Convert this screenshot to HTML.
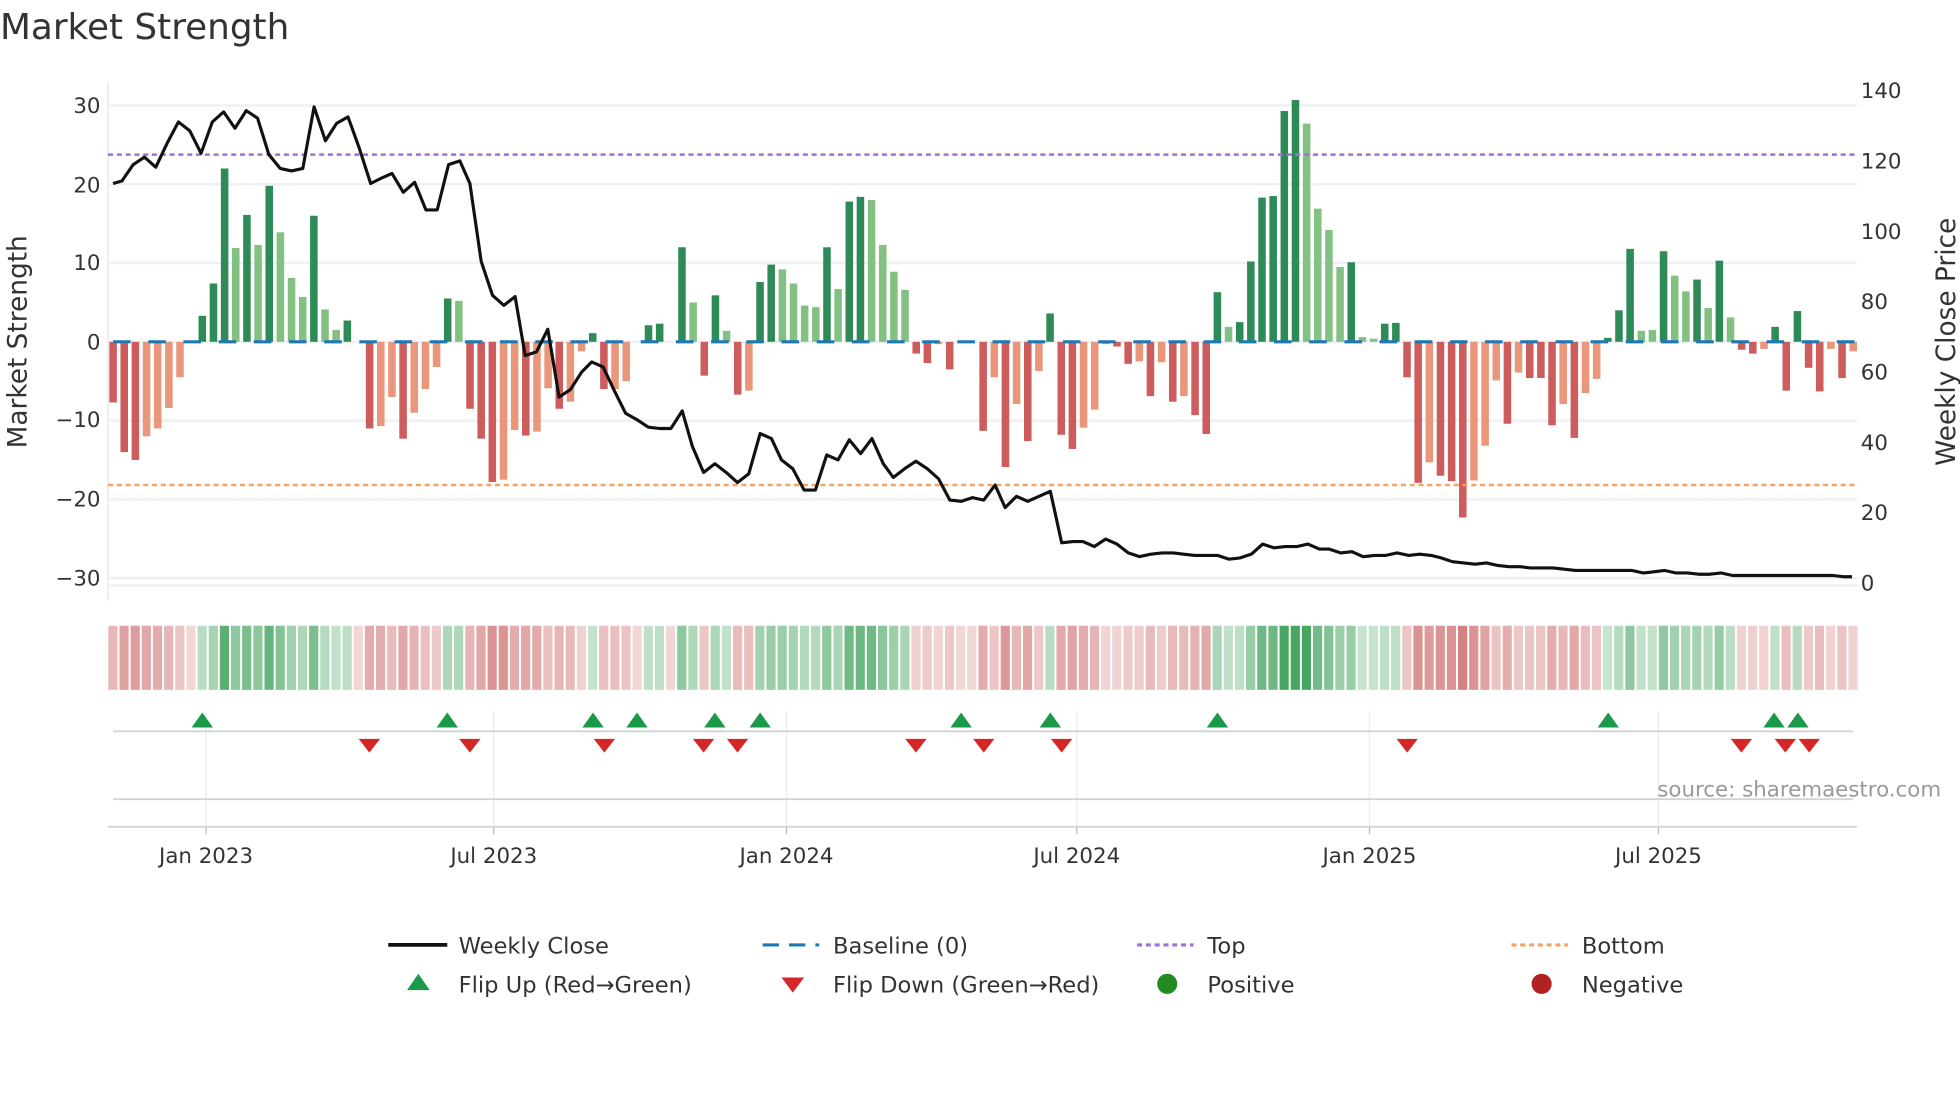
<!DOCTYPE html>
<html><head><meta charset="utf-8">
<style>
html,body{margin:0;padding:0;background:#fff;}
svg{display:block;font-family:"DejaVu Sans","Liberation Sans",sans-serif;}
</style></head>
<body>
<svg id="s" width="1960" height="1102" viewBox="0 0 1560 877" xmlns="http://www.w3.org/2000/svg">
<rect width="1560" height="877" fill="#fff"/>
<text x="0" y="31" font-size="28.5" fill="#333">Market Strength</text>
<g id="grid"></g>
<g id="bars"></g>
<g id="strip"></g>
<g id="marks"></g>
<g font-size="17" fill="#333">
<text x="80" y="90" text-anchor="end">30</text>
<text x="80" y="153" text-anchor="end">20</text>
<text x="80" y="215" text-anchor="end">10</text>
<text x="80" y="278" text-anchor="end">0</text>
<text x="80" y="340" text-anchor="end">−10</text>
<text x="80" y="403" text-anchor="end">−20</text>
<text x="80" y="466" text-anchor="end">−30</text>
<text x="1481" y="78">140</text>
<text x="1481" y="134">120</text>
<text x="1481" y="190">100</text>
<text x="1481" y="246">80</text>
<text x="1481" y="302">60</text>
<text x="1481" y="358">40</text>
<text x="1481" y="414">20</text>
<text x="1481" y="470">0</text>
<text x="164" y="687" text-anchor="middle">Jan 2023</text>
<text x="393" y="687" text-anchor="middle">Jul 2023</text>
<text x="626" y="687" text-anchor="middle">Jan 2024</text>
<text x="857" y="687" text-anchor="middle">Jul 2024</text>
<text x="1090" y="687" text-anchor="middle">Jan 2025</text>
<text x="1320" y="687" text-anchor="middle">Jul 2025</text>
</g>
<text transform="translate(21,272) rotate(-90)" font-size="21" fill="#333" text-anchor="middle">Market Strength</text>
<text transform="translate(1556,272) rotate(-90)" font-size="21" fill="#333" text-anchor="middle">Weekly Close Price</text>
<text x="1545" y="634" font-size="17" fill="#999" text-anchor="end">source: sharemaestro.com</text>
<g font-size="18" fill="#333">
<line x1="309" y1="752" x2="356" y2="752" stroke="#111" stroke-width="3"/>
<text x="365" y="759">Weekly Close</text>
<line x1="607" y1="752" x2="652" y2="752" stroke="#1f77b4" stroke-width="2.5" stroke-dasharray="13,8"/>
<text x="663" y="759">Baseline (0)</text>
<line x1="905" y1="752" x2="950" y2="752" stroke="#a070d8" stroke-width="2.5" stroke-dasharray="4,3"/>
<text x="961" y="759">Top</text>
<line x1="1203" y1="752" x2="1248" y2="752" stroke="#f4a460" stroke-width="2.5" stroke-dasharray="4,3"/>
<text x="1259" y="759">Bottom</text>
<polygon points="324,788 342,788 333,775" fill="#1a9a48"/>
<text x="365" y="790">Flip Up (Red→Green)</text>
<polygon points="622,778 640,778 631,790" fill="#d62728"/>
<text x="663" y="790">Flip Down (Green→Red)</text>
<circle cx="929" cy="783" r="8" fill="#228b22"/>
<text x="961" y="790">Positive</text>
<circle cx="1227" cy="783" r="8" fill="#b22222"/>
<text x="1259" y="790">Negative</text>
</g>
</svg>
<script>
var NS="http://www.w3.org/2000/svg";
function el(p,t,a){var e=document.createElementNS(NS,t);for(var k in a)e.setAttribute(k,a[k]);document.getElementById(p).appendChild(e);return e;}
var V=[[-7.7,'D'],[-14,'D'],[-15,'D'],[-12,'L'],[-11,'L'],[-8.4,'L'],[-4.5,'L'],[0,'Z'],[3.3,'G'],[7.4,'G'],[22,'G'],[11.9,'g'],[16.1,'G'],[12.3,'g'],[19.8,'G'],[13.9,'g'],[8.1,'g'],[5.7,'g'],[16,'G'],[4.1,'g'],[1.5,'g'],[2.7,'G'],[0,'Z'],[-11,'D'],[-10.7,'L'],[-7,'L'],[-12.3,'D'],[-9,'L'],[-6,'L'],[-3.2,'L'],[5.5,'G'],[5.2,'g'],[-8.5,'D'],[-12.3,'D'],[-17.8,'D'],[-17.5,'L'],[-11.2,'L'],[-11.9,'D'],[-11.4,'L'],[-5.9,'L'],[-8.5,'D'],[-7.6,'L'],[-1.2,'L'],[1.1,'G'],[-6,'D'],[-6,'L'],[-5,'L'],[0,'Z'],[2.1,'G'],[2.3,'G'],[0,'Z'],[12,'G'],[5,'g'],[-4.3,'D'],[5.9,'G'],[1.4,'g'],[-6.7,'D'],[-6.2,'L'],[7.6,'G'],[9.8,'G'],[9.2,'g'],[7.4,'g'],[4.6,'g'],[4.4,'g'],[12,'G'],[6.7,'g'],[17.8,'G'],[18.4,'G'],[18,'g'],[12.3,'g'],[8.9,'g'],[6.6,'g'],[-1.5,'D'],[-2.7,'D'],[-0.3,'L'],[-3.5,'D'],[0,'Z'],[0,'Z'],[-11.3,'D'],
[-4.5,'L'],[-15.9,'D'],[-7.9,'L'],[-12.6,'D'],[-3.7,'L'],[3.6,'G'],[-11.8,'D'],[-13.6,'D'],[-10.9,'L'],[-8.6,'L'],[-0.3,'L'],[-0.6,'D'],[-2.8,'D'],[-2.5,'L'],[-6.9,'D'],[-2.6,'L'],[-7.6,'D'],[-6.9,'L'],[-9.3,'D'],[-11.7,'D'],[6.3,'G'],[1.9,'g'],[2.5,'G'],[10.2,'G'],[18.3,'G'],[18.5,'G'],[29.3,'G'],[30.7,'G'],[27.7,'g'],[16.9,'g'],[14.2,'g'],[9.5,'g'],[10.1,'G'],[0.6,'g'],[0.4,'g'],[2.3,'G'],[2.4,'G'],[-4.5,'D'],[-17.9,'D'],[-15.3,'L'],[-17,'D'],[-17.7,'D'],[-22.3,'D'],[-17.6,'L'],[-13.2,'L'],[-4.9,'L'],[-10.4,'D'],[-3.9,'L'],[-4.6,'D'],[-4.6,'D'],[-10.6,'D'],[-7.9,'L'],[-12.2,'D'],[-6.5,'L'],[-4.7,'L'],[0.5,'G'],[4,'G'],[11.8,'G'],[1.4,'g'],[1.5,'g'],[11.5,'G'],[8.4,'g'],[6.4,'g'],[7.9,'G'],[4.3,'g'],[10.3,'G'],[3.1,'g'],[-1,'D'],[-1.5,'D'],[-0.9,'L'],[1.9,'G'],[-6.2,'D'],[3.9,'G'],[-3.3,'D'],[-6.3,'D'],[-0.9,'L'],[-4.6,'D'],[-1.2,'L']];
var C={D:'#cd5c5c',L:'#e9967a',G:'#2e8b57',g:'#82c182',Z:'#fff'};
var X0=90,ST=(1475-90)/(V.length-1);
function yv(v){return 272-v*6.27;}
[30,20,10,0,-10,-20,-30].forEach(function(v){el('grid','line',{x1:86,x2:1478,y1:yv(v),y2:yv(v),stroke:'#eef0f3','stroke-width':2});});
el('grid','line',{x1:86,x2:86,y1:65,y2:478,stroke:'#eef0f3','stroke-width':2});
el('grid','line',{x1:86,x2:1478,y1:466,y2:466,stroke:'#eef0f3','stroke-width':2});
[164,393,626,857,1090,1320].forEach(function(x){el('grid','line',{x1:x,x2:x,y1:566,y2:658,stroke:'#e8ecf0','stroke-width':1});el('grid','line',{x1:x,x2:x,y1:658,y2:664,stroke:'#bbb','stroke-width':1});});
el('grid','line',{x1:90,x2:1475,y1:582,y2:582,stroke:'#d0d3d8','stroke-width':1.5});
el('grid','line',{x1:90,x2:1475,y1:636,y2:636,stroke:'#d0d3d8','stroke-width':1.5});
el('grid','line',{x1:86,x2:1478,y1:658,y2:658,stroke:'#d0d3d8','stroke-width':1.5});
V.forEach(function(b,i){var x=X0+i*ST,v=b[0];if(b[1]=='Z')return;var y0=yv(0),y1=yv(v);el('bars','rect',{x:x-3,y:Math.min(y0,y1),width:6,height:Math.max(1,Math.abs(y1-y0)),fill:C[b[1]]});});
el('bars','line',{x1:90,x2:1478,y1:272,y2:272,stroke:'#1f77b4','stroke-width':2.5,'stroke-dasharray':'14,14'});
el('bars','line',{x1:86,x2:1478,y1:123,y2:123,stroke:'#a070d8','stroke-width':2,'stroke-dasharray':'4,3'});
el('bars','line',{x1:86,x2:1478,y1:386,y2:386,stroke:'#f4a460','stroke-width':2,'stroke-dasharray':'4,3'});
var P="90,146 97,144 106,131 115,125 124,133 133,114 142,97 151,104 160,122 169,97 178,89 187,102 196,88 205,94 214,123 223,134 232,136 241,134 250,85 259,112 268,98 277,93 286,118 295,146 303,142 312,138 321,153 330,145 339,167 348,167 357,131 366,128 374,146 383,208 392,235 401,243 410,236 418,283 427,280 436,262 445,316 454,310 463,296 471,288 480,292 489,311 498,329 507,334 516,340 525,341 534,341 543,327 551,355 560,376 569,369 578,376 587,384 596,377 605,345 614,349 622,366 631,373 640,390 649,390 658,362 667,366 676,350 685,361 694,349 703,369 711,380 720,373 729,367 738,373 747,381 756,398 765,399 774,396 783,398 792,386 800,404 809,395 818,399 827,395 836,391 845,432 854,431 862,431 871,435 880,429 889,433 898,440 907,443 916,441 925,440 934,440 942,441 951,442 960,442 969,442 978,445 987,444 996,441 1005,433 1014,436 1023,435 1032,435 1041,433 1050,437 1058,437 1067,440 1076,439 1085,443 1094,442 1103,442 1112,440 1121,442 1130,441 1139,442 1147,444 1156,447 1165,448 1174,449 1183,448 1192,450 1201,451 1210,451 1218,452 1227,452 1236,452 1245,453 1254,454 1263,454 1272,454 1281,454 1290,454 1299,454 1308,456 1317,455 1325,454 1334,456 1343,456 1352,457 1361,457 1370,456 1379,458 1388,458 1396,458 1405,458 1414,458 1423,458 1432,458 1441,458 1450,458 1459,458 1468,459 1474,459";
el('bars','polyline',{points:P,fill:'none',stroke:'#111','stroke-width':2.5,'stroke-linejoin':'round'});
function mix(a,b,t){return 'rgb('+[0,1,2].map(function(k){return Math.round(a[k]+(b[k]-a[k])*t);}).join(',')+')';}
V.forEach(function(b,i){var x=X0+i*ST,v=b[0];var t=0.25+0.6*Math.min(1,Math.abs(v)/26);var c;
 if(v>0)c=mix([255,255,255],[40,150,70],t);else c=mix([255,255,255],[200,90,90],v==0?0.25:t);
 el('strip','rect',{x:x-3.8,y:498,width:7.3,height:51,fill:c});});
[161,356,472,507,569,605,765,836,969,1280,1412,1431].forEach(function(x){el('marks','polygon',{points:(x-8.5)+',579 '+(x+8.5)+',579 '+x+',567',fill:'#1a9a48'});});
[294,374,481,560,587,729,783,845,1120,1386,1421,1440].forEach(function(x){el('marks','polygon',{points:(x-8.5)+',588 '+(x+8.5)+',588 '+x+',599',fill:'#d62728'});});
</script>
</body></html>
